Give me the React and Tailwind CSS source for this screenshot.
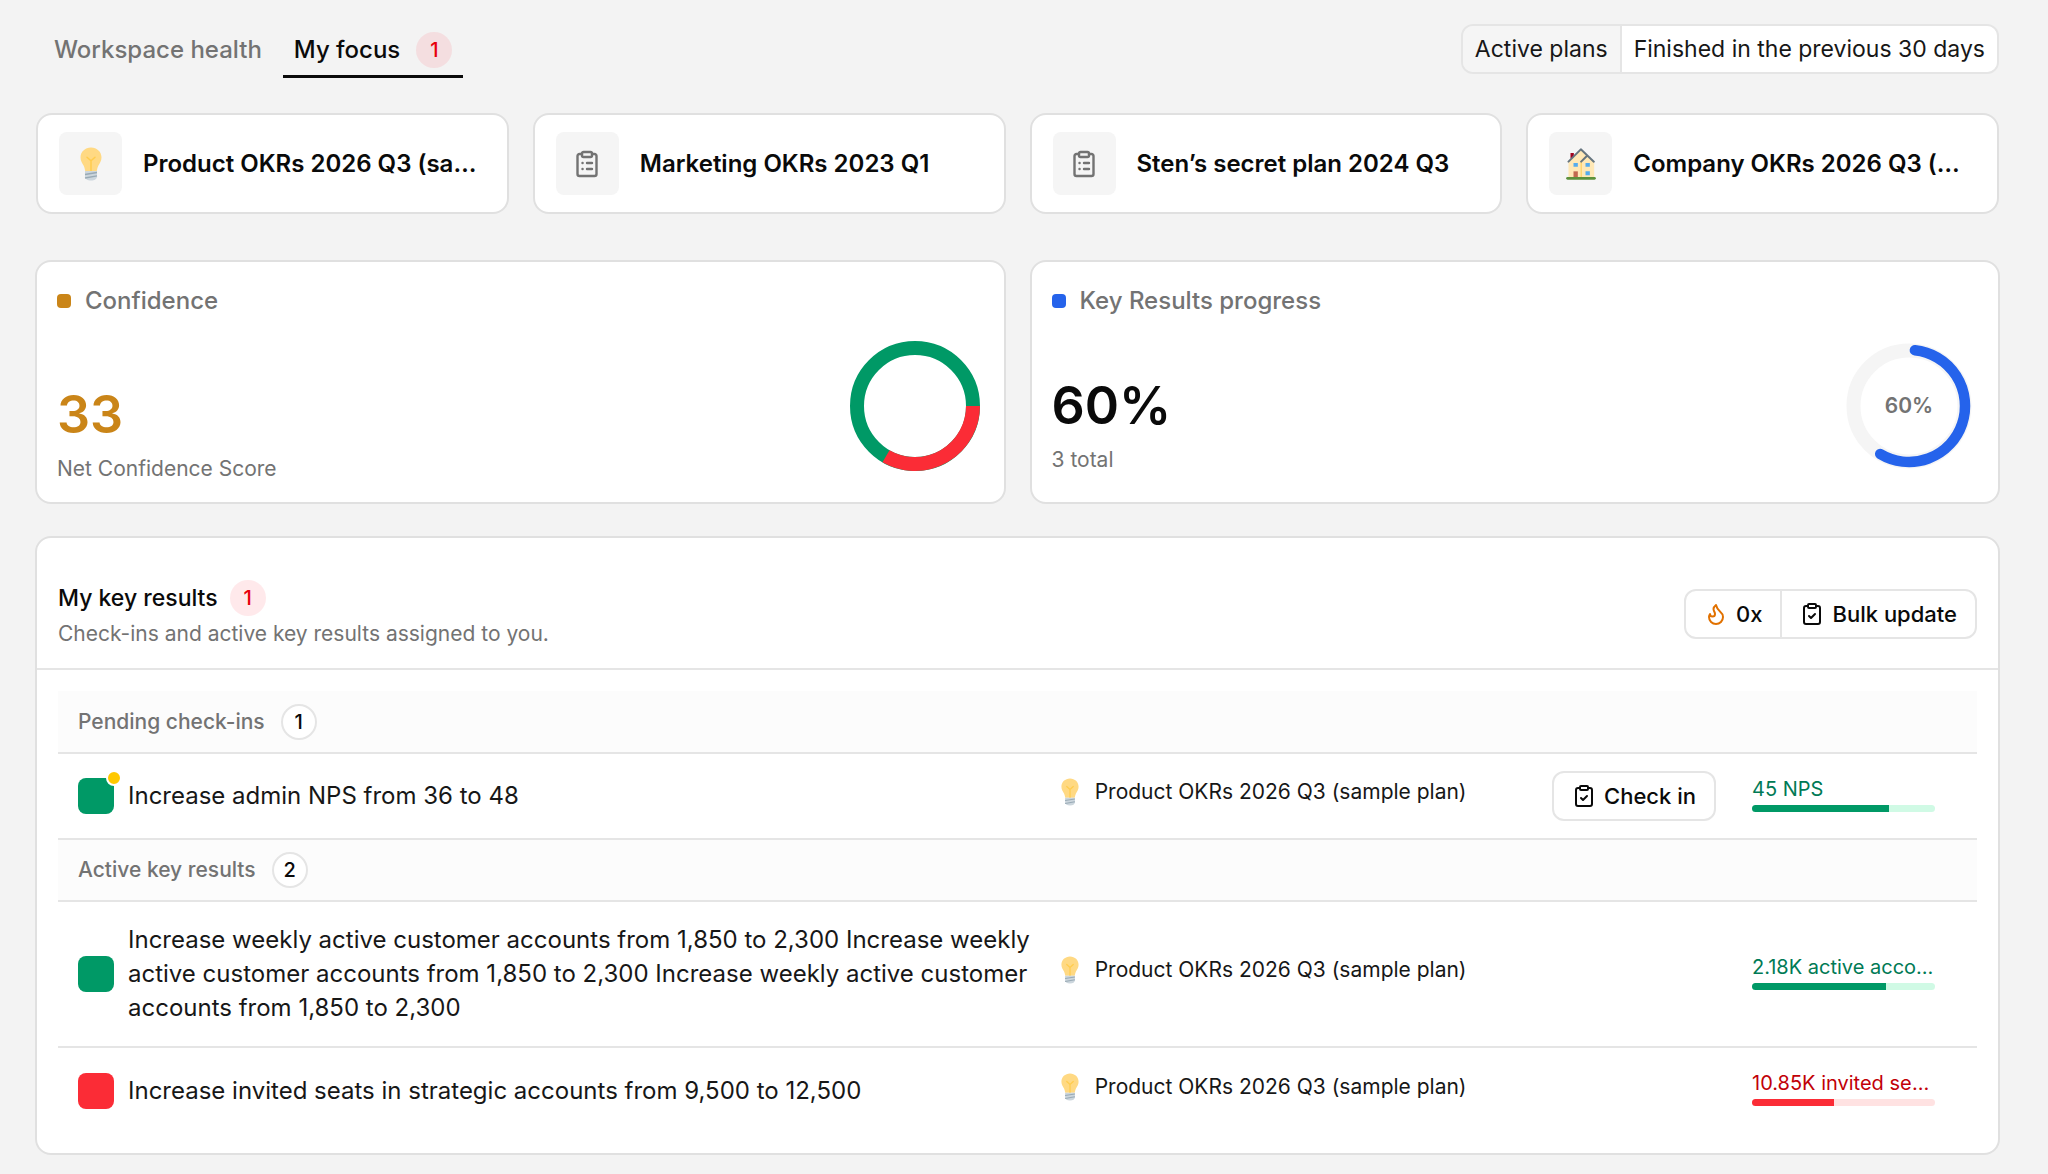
import { useState } from 'react';
import { ClipboardCheck, Flame } from 'lucide-react';

const plans = [
    { id: 1, name: 'Product OKRs 2026 Q3 (sample plan)', icon: 'bulb' },
    { id: 2, name: 'Marketing OKRs 2023 Q1', icon: 'clipboard' },
    { id: 3, name: 'Sten’s secret plan 2024 Q3', icon: 'clipboard' },
    { id: 4, name: 'Company OKRs 2026 Q3 (sample plan)', icon: 'house' },
];

const groups = [
    {
        title: 'Pending check-ins',
        items: [
            {
                id: 11,
                title: 'Increase admin NPS from 36 to 48',
                plan: 'Product OKRs 2026 Q3 (sample plan)',
                value: '45 NPS',
                progress: 75,
                status: 'good',
                pending: true,
            },
        ],
    },
    {
        title: 'Active key results',
        items: [
            {
                id: 21,
                title: 'Increase weekly active customer accounts from 1,850 to 2,300 Increase weekly active customer accounts from 1,850 to 2,300 Increase weekly active customer accounts from 1,850 to 2,300',
                plan: 'Product OKRs 2026 Q3 (sample plan)',
                value: '2.18K active accounts',
                progress: 73,
                status: 'good',
            },
            {
                id: 22,
                title: 'Increase invited seats in strategic accounts from 9,500 to 12,500',
                plan: 'Product OKRs 2026 Q3 (sample plan)',
                value: '10.85K invited seats',
                progress: 45,
                status: 'bad',
            },
        ],
    },
];

const statusStyles = {
    good: { square: 'bg-[#009966]', text: 'text-[#007a55]', track: 'bg-[#d0fae5]' },
    bad: { square: 'bg-[#fb2c36]', text: 'text-[#c10007]', track: 'bg-[#ffe2e2]' },
};

const BulbIcon = ({ className }) => (
    <svg viewBox="0 0 22 34" className={className} aria-hidden="true">
        <path d="M11 .5C5 .5.5 4.900.5 10.500c0 3.800 1.900 5.800 3.200 8.200 1 1.900 1.100 3.500 1.500 5.300h11.600c.4-1.800.5-3.400 1.500-5.300 1.300-2.400 3.200-4.400 3.200-8.200C21.500 4.900 17 .5 11 .5z" fill="#ffd983" />
        <path d="M7 10.200l4 3.600 4-3.600M11 13.800V24" fill="none" stroke="#ffcc4d" strokeWidth="1.500" strokeLinecap="round" />
        <path d="M5 24h12v5.500c0 2.500-2.500 4-6 4s-6-1.500-6-4z" fill="#ccd6dd" />
        <path d="M5 27.500l12-2M5 31l12-2.200" stroke="#99aab5" strokeWidth="1.300" fill="none" />
    </svg>
);

const HouseIcon = ({ className }) => (
    <svg viewBox="46 41 89 96" className={className} aria-hidden="true">
        <path d="M59 56h10v16H59z" fill="#a0041e" />
        <path d="M53 83l37-37 40 37v46H53z" fill="#ffe8b6" />
        <path d="M91 82v47" stroke="#ffcc4d" strokeWidth="3" />
        <path d="M53 82l37-37 39 37M91 82l17-17" fill="none" stroke="#66757f" strokeWidth="6" strokeLinecap="round" strokeLinejoin="round" />
        <path d="M68 86h13v11H68zM104 86h13v11h-13zM104 111h13v12h-13z" fill="#55acee" />
        <path d="M68 111h13v18H68z" fill="#c1694f" />
        <rect x="46" y="128" width="89" height="8" rx="4" fill="#5c913b" />
    </svg>
);

const ClipboardIcon = ({ className }) => (
    <svg viewBox="0 0 24 28" className={className} fill="none" stroke="currentColor" strokeWidth="2.400" strokeLinecap="round" strokeLinejoin="round" aria-hidden="true">
        <rect x="7" y="2" width="10" height="5" rx="1.500" />
        <path d="M7 4H4.500A2 2 0 0 0 2.500 6v18a2 2 0 0 0 2 2h15a2 2 0 0 0 2-2V6a2 2 0 0 0-2-2H17M7.500 13h.1M7.500 19h.1M12 13h5M12 19h5" />
    </svg>
);

const PlanIcon = ({ icon }) => {
    if (icon === 'bulb') return <BulbIcon className="h-[34px] w-[22px]" />;
    if (icon === 'house') return <HouseIcon className="h-8 w-[30px]" />;
    return <ClipboardIcon className="h-7 w-6 text-[#737373]" />;
};

const AlertBadge = ({ count }) => (
    <span className="flex size-9 items-center justify-center rounded-full bg-[#fb2c36]/10 text-[20px] leading-none font-medium text-[#e7000b]">
        {count}
    </span>
);

const CountBadge = ({ count }) => (
    <span className="flex size-9 items-center justify-center rounded-full border-2 border-[#e5e5e5] bg-white text-[20px] leading-none font-medium text-[#0a0a0a]">
        {count}
    </span>
);

const ConfidenceRing = () => (
    <svg viewBox="0 0 130 130" className="size-[130px]" fill="none" strokeWidth="14" role="img" aria-label="Confidence">
        <circle cx="65" cy="65" r="58" stroke="#009966" />
        <path d="M123 65A58 58 0 0 1 36 115.200" stroke="#fb2c36" />
    </svg>
);

const ProgressRing = ({ value }) => (
    <div className="relative flex size-[130px] items-center justify-center">
        <svg viewBox="0 0 130 130" className="absolute inset-0" fill="none" aria-hidden="true">
            <circle cx="65" cy="65" r="55.500" stroke="#f5f5f5" strokeWidth="14" />
            <path d="M70.900 9.300A56 56 0 1 1 36.200 113" stroke="#2563eb" strokeWidth="10.500" strokeLinecap="round" />
        </svg>
        <span className="relative text-[21px] leading-6 font-semibold text-[#737373]">{value}%</span>
    </div>
);

const StatCard = ({ dot, title, children }) => (
    <section className="rounded-2xl border-2 border-[#e0e0e0] bg-white px-5 pt-[21px] pb-[9px]">
        <h2 className="flex items-center gap-3.5 text-2xl leading-9 font-medium text-[#737373]">
            <span className={`size-3.5 rounded ${dot}`} />
            {title}
        </h2>
        <div className="flex h-[174px] items-center justify-between pr-1">{children}</div>
    </section>
);

const KeyResultRow = ({ item }) => {
    const styles = statusStyles[item.status];
    return (
        <tr className="border-t-2 border-[#e5e5e5]">
            <td className="h-[86px] py-[21px] pl-5">
                <div className="flex items-center gap-3.5">
                    <span className={`relative size-9 shrink-0 rounded-lg ${styles.square}`}>
                        {item.pending && (
                            <span className="absolute -top-2 -right-2 size-4 rounded-full border-2 border-white bg-[#ffc800]" />
                        )}
                    </span>
                    <span className="text-2xl leading-[34px] text-[#171717]">{item.title}</span>
                </div>
            </td>
            <td className="pb-2 pl-6">
                <div className="flex items-center gap-4">
                    <BulbIcon className="h-7 w-[18px]" />
                    <span className="text-[21px] leading-7 text-[#171717]">{item.plan}</span>
                </div>
            </td>
            <td className="pr-9 text-right">
                {item.pending && (
                    <button className="inline-flex h-[50px] items-center gap-2 rounded-xl border-2 border-[#e5e5e5] bg-white px-[18px] align-middle text-[22px] font-medium text-[#0a0a0a]">
                        <ClipboardCheck size={24} />
                        Check in
                    </button>
                )}
            </td>
            <td className="pr-[42px] pb-1.5">
                <div className={`truncate text-[20px] leading-7 ${styles.text}`}>{item.value}</div>
                <div className={`mt-0.5 h-[7px] overflow-hidden rounded-full ${styles.track}`}>
                    <div className={`h-full ${styles.square}`} style={{ width: `${item.progress}%` }} />
                </div>
            </td>
        </tr>
    );
};

const App = () => {
    const [tab, setTab] = useState('focus');
    const [filter, setFilter] = useState('active');

    const tabClass = (name) =>
        tab === name ? 'border-[#0a0a0a] text-[#0a0a0a]' : 'border-transparent text-[#737373]';
    const filterClass = (name) => (filter === name ? 'bg-[#f5f5f5]' : 'bg-white');

    return (
        <div className="min-h-screen bg-[#f3f3f3] pt-6 pr-12 pb-4 pl-[35px] font-['Inter',sans-serif] text-[#0a0a0a]">
            {/* Tabs and plan filter */}
            <header className="flex items-start justify-between pr-px pl-2">
                <nav className="flex gap-2.5">
                    <button onClick={() => setTab('health')} className={`flex h-[54px] items-center border-b-3 px-[11px] text-2xl font-medium ${tabClass('health')}`}>
                        Workspace health
                    </button>
                    <button onClick={() => setTab('focus')} className={`flex h-[54px] items-center gap-4 border-b-3 px-[11px] text-2xl font-medium ${tabClass('focus')}`}>
                        My focus
                        <AlertBadge count={1} />
                    </button>
                </nav>
                <div className="flex h-[50px] overflow-hidden rounded-xl border-2 border-[#e5e5e5] text-[23px] text-[#171717]">
                    <button onClick={() => setFilter('active')} className={`border-r-2 border-[#e5e5e5] px-3 ${filterClass('active')}`}>
                        Active plans
                    </button>
                    <button onClick={() => setFilter('finished')} className={`px-3 ${filterClass('finished')}`}>
                        Finished in the previous 30 days
                    </button>
                </div>
            </header>

            {/* Plans */}
            <div className="mt-[35px] grid grid-cols-4 gap-6 px-px">
                {plans.map((plan) => (
                    <a key={plan.id} href="#" className="flex min-w-0 items-center gap-[21px] rounded-2xl border-2 border-[#e0e0e0] bg-white py-[17px] pr-7 pl-[21px]">
                        <span className="flex size-[63px] shrink-0 items-center justify-center rounded-lg bg-[#f5f5f5]">
                            <PlanIcon icon={plan.icon} />
                        </span>
                        <span className="truncate text-2xl font-semibold">{plan.name}</span>
                    </a>
                ))}
            </div>

            {/* Stats */}
            <div className="mt-[46px] grid grid-cols-2 gap-6">
                <StatCard dot="bg-[#ca8518]" title="Confidence">
                    <div className="pt-14">
                        <p className="text-[52px] leading-[60px] font-semibold text-[#ca8518]">33</p>
                        <p className="mt-2.5 text-[21px] leading-7 text-[#737373]">Net Confidence Score</p>
                    </div>
                    <ConfidenceRing />
                </StatCard>
                <StatCard dot="bg-[#2563eb]" title="Key Results progress">
                    <div className="pt-[38px]">
                        <p className="text-[52px] leading-[60px] font-semibold">60%</p>
                        <p className="mt-2.5 text-[21px] leading-7 text-[#737373]">3 total</p>
                    </div>
                    <ProgressRing value={60} />
                </StatCard>
            </div>

            {/* Key results */}
            <section className="mt-8 rounded-2xl border-2 border-[#e0e0e0] bg-white pb-5">
                <div className="flex items-center justify-between border-b-2 border-[#e5e5e5] px-[21px] pt-[42px] pb-4">
                    <div>
                        <h2 className="flex items-center gap-3 text-[23px] leading-9 font-medium">
                            My key results
                            <AlertBadge count={1} />
                        </h2>
                        <p className="text-[21px] leading-9 text-[#737373]">Check-ins and active key results assigned to you.</p>
                    </div>
                    <div className="mb-1 flex h-[50px] overflow-hidden rounded-xl border-2 border-[#e5e5e5] text-[22px] font-medium">
                        <button className="flex items-center gap-2 border-r-2 border-[#e5e5e5] px-[18px]">
                            <Flame size={24} className="text-[#e17100]" />
                            0x
                        </button>
                        <button className="flex items-center gap-2 px-[18px]">
                            <ClipboardCheck size={24} />
                            Bulk update
                        </button>
                    </div>
                </div>
                <div className="px-[21px] pt-[21px]">
                    <table className="w-full table-fixed border-collapse text-left">
                        <colgroup>
                            <col className="w-[51%]" />
                            <col className="w-[24%]" />
                            <col />
                            <col className="w-[225px]" />
                        </colgroup>
                        {groups.map((group) => (
                            <tbody key={group.title} className="border-t-2 border-[#e5e5e5] first-of-type:border-t-0">
                                <tr className="bg-[#fcfcfc]">
                                    <th colSpan="4" scope="rowgroup" className="h-[62px] px-5 font-medium">
                                        <span className="flex items-center gap-4 text-[21px] text-[#737373]">
                                            {group.title}
                                            <CountBadge count={group.items.length} />
                                        </span>
                                    </th>
                                </tr>
                                {group.items.map((item) => (
                                    <KeyResultRow key={item.id} item={item} />
                                ))}
                            </tbody>
                        ))}
                    </table>
                </div>
            </section>
        </div>
    );
};

export default App;
